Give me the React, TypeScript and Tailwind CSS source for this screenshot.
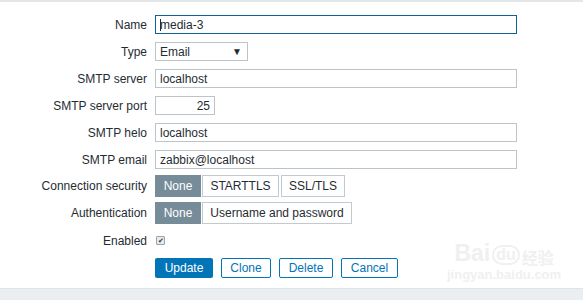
import React from "react";

const font = { fontFamily: '"Liberation Sans", Arial, sans-serif' };

function Row({ label, top, h = 19, children }: { label: string; top: string; h?: number; children: React.ReactNode }) {
  return (
    <div className={`flex items-center ${top}`} style={{ height: h }}>
      <div className="w-[147px] shrink-0 text-right text-[12px] text-[#1f2c33] leading-none">{label}</div>
      <div className="ml-2 flex items-center h-full">{children}</div>
    </div>
  );
}

function TextInput({ value, w = "w-[362px]", focused = false, right = false }: { value: string; w?: string; focused?: boolean; right?: boolean }) {
  return (
    <div
      className={`${w} h-[19px] flex items-center px-[4px] text-[12px] text-[#1f2c33] bg-white border ${
        focused ? "border-[#12629a]" : "border-[#bcc3c9]"
      } ${right ? "justify-end" : ""}`}
    >
      {focused && <span className="w-px h-[12px] bg-[#1f2c33] -mr-px" />}
      {value}
    </div>
  );
}

export default function App() {
  return (
    <div className="w-[583px] h-[300px] bg-white relative overflow-hidden flex flex-col" style={font}>
      <div className="h-[2px] bg-[#e4e7ea]" />

      {/* form */}
      <div className="flex flex-col flex-1">
        <Row label="Name" top="mt-[13px]">
          <TextInput value="media-3" focused />
        </Row>
        <Row label="Type" top="mt-[8px]">
          <div className="w-[93px] h-[19px] border border-[#bcc3c9] flex items-center justify-between pl-[4px] pr-[5px] text-[12px] text-[#1f2c33]">
            <span>Email</span>
            <span className="text-[10px] leading-none">▼</span>
          </div>
        </Row>
        <Row label="SMTP server" top="mt-[8px]">
          <TextInput value="localhost" />
        </Row>
        <Row label="SMTP server port" top="mt-[8px]">
          <TextInput value="25" w="w-[60px]" right />
        </Row>
        <Row label="SMTP helo" top="mt-[8px]">
          <TextInput value="localhost" />
        </Row>
        <Row label="SMTP email" top="mt-[8px]">
          <TextInput value="zabbix@localhost" />
        </Row>
        <Row label="Connection security" top="mt-[6px]" h={22}>
          <div className="flex gap-[1px] h-[22px] text-[12px]">
            <div className="w-[46px] bg-[#768c98] text-white flex items-center justify-center">None</div>
            <div className="w-[77px] border border-[#c3cacf] text-[#1f2c33] flex items-center justify-center">STARTTLS</div>
            <div className="w-[64px] ml-[1px] border border-[#c3cacf] text-[#1f2c33] flex items-center justify-center">SSL/TLS</div>
          </div>
        </Row>
        <Row label="Authentication" top="mt-[5px]" h={22}>
          <div className="flex gap-[1px] h-[22px] text-[12px]">
            <div className="w-[46px] bg-[#768c98] text-white flex items-center justify-center">None</div>
            <div className="w-[150px] border border-[#c3cacf] text-[#1f2c33] flex items-center justify-center">Username and password</div>
          </div>
        </Row>
        <Row label="Enabled" top="mt-[7px]">
          <span className="w-[9px] h-[9px] ml-px rounded-[1px] border border-[#9aa3aa] bg-[#e8eaec] flex items-center justify-center text-[7px] leading-none text-[#333]">
            ✔
          </span>
        </Row>
        <div className="flex mt-[8px] ml-[155px] gap-[8px] h-[20px] text-[12px]">
          <button className="w-[58px] h-[20px] bg-[#0275b8] text-white rounded-[2px]">Update</button>
          <button className="w-[50px] h-[20px] border border-[#0275b8] text-[#0275b8] rounded-[2px]">Clone</button>
          <button className="w-[54px] h-[20px] border border-[#0275b8] text-[#0275b8] rounded-[2px]">Delete</button>
          <button className="w-[57px] h-[20px] border border-[#0275b8] text-[#0275b8] rounded-[2px]">Cancel</button>
        </div>
      </div>

      <div className="h-[12px] bg-[#ebeef0] border-t border-[#e0e3e6]" />

      {/* watermark */}
      <div className="absolute left-[447px] top-[242px] flex flex-col items-center text-[#f0f0f0] pointer-events-none">
        <div className="flex items-end gap-[2px] leading-none">
          <span className="text-[23px] font-bold">Bai</span>
          <span className="text-[16px] font-bold rounded-full border-2 border-[#f0f0f0] px-[2px]">du</span>
          <span className="text-[16px] font-bold" style={{ fontFamily: '"Noto Sans CJK SC", sans-serif' }}>经验</span>
        </div>
        <span className="text-[13px] font-bold mt-[3px] leading-none">jingyan.baidu.com</span>
      </div>
    </div>
  );
}
